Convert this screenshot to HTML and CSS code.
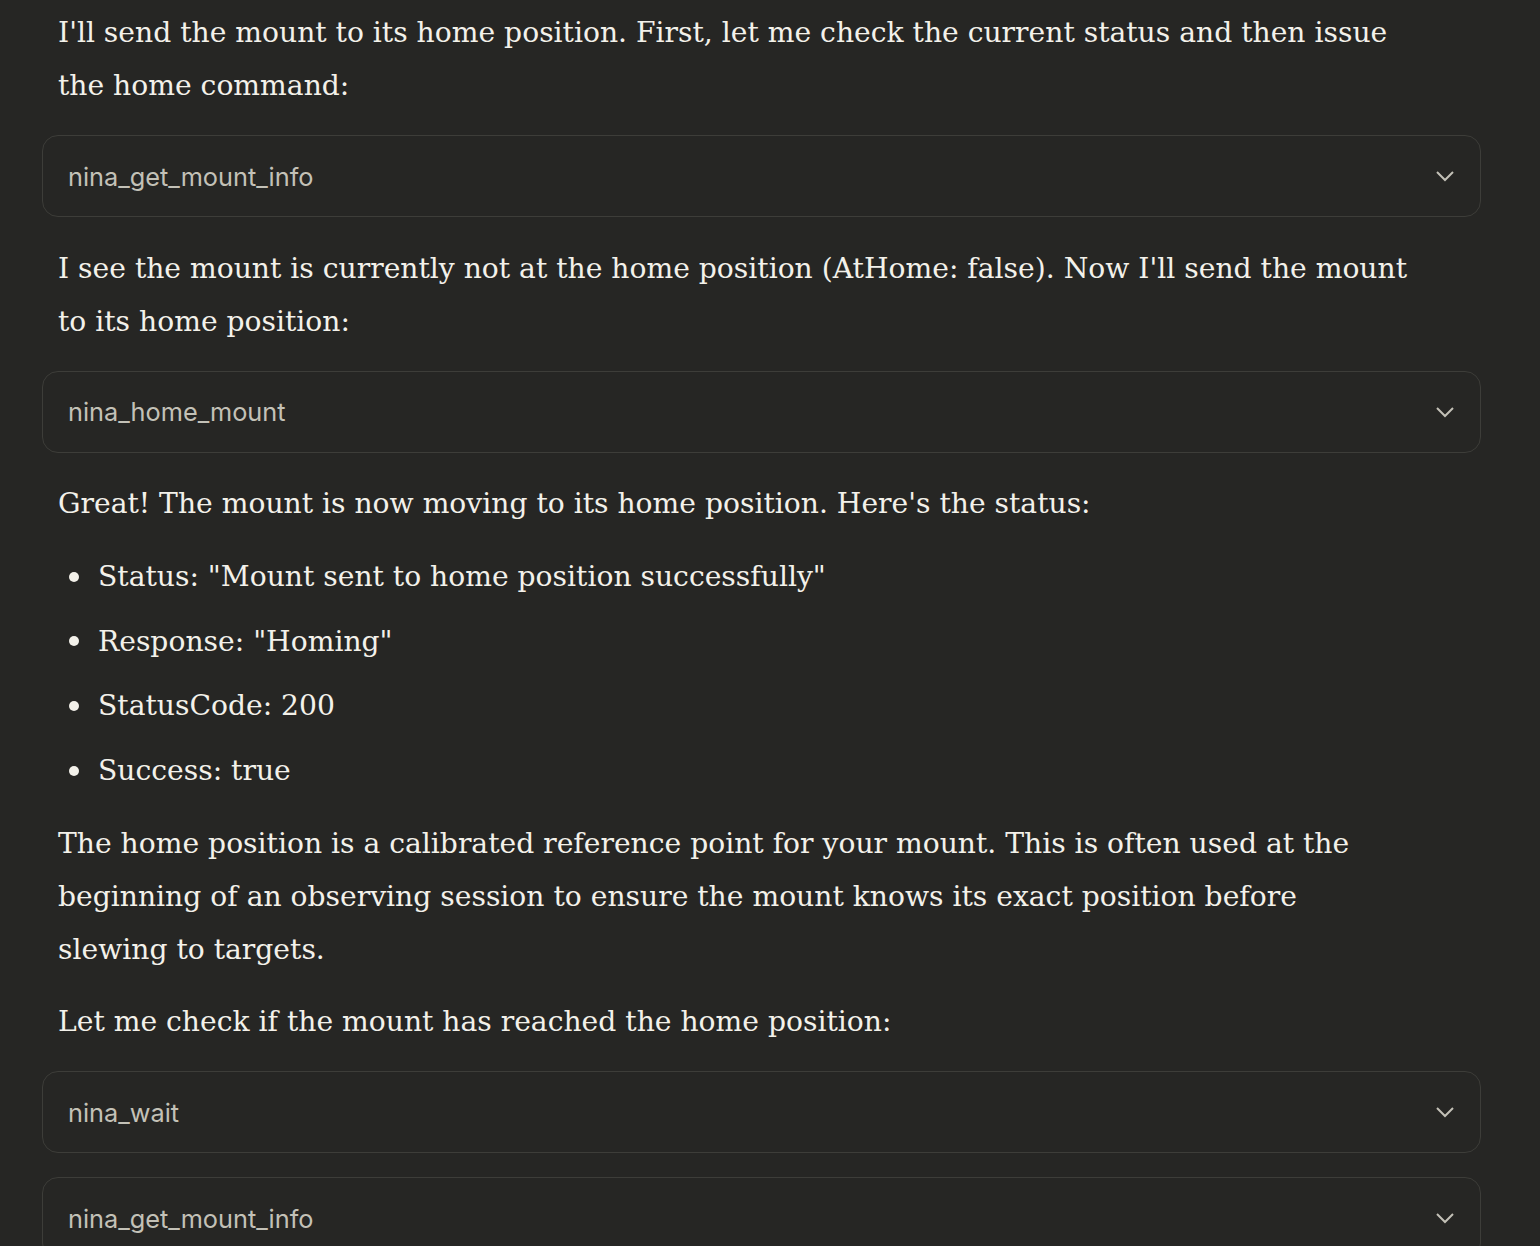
FILE: index.html
```html
<!DOCTYPE html>
<html lang="en">
<head>
<meta charset="utf-8">
<title>Mount home</title>
<link rel="stylesheet" href="styles.css">
</head>
<body>
<main class="thread">
  <p class="msg">I'll send the mount to its home position. First, let me check the current status and then issue<br>the home command:</p>
  <div class="tools">
    <div class="tool"><span class="tool-name">nina_get_mount_info</span><svg class="chev" viewBox="0 0 20 12" width="20" height="12"><path d="M2 2 L10 10 L18 2" fill="none" stroke="currentColor" stroke-width="2"/></svg></div>
  </div>
  <p class="msg">I see the mount is currently not at the home position (AtHome: false). Now I'll send the mount<br>to its home position:</p>
  <div class="tools">
    <div class="tool"><span class="tool-name">nina_home_mount</span><svg class="chev" viewBox="0 0 20 12" width="20" height="12"><path d="M2 2 L10 10 L18 2" fill="none" stroke="currentColor" stroke-width="2"/></svg></div>
  </div>
  <p class="msg">Great! The mount is now moving to its home position. Here's the status:</p>
  <ul class="list">
    <li><span class="dot"></span>Status: "Mount sent to home position successfully"</li>
    <li><span class="dot"></span>Response: "Homing"</li>
    <li><span class="dot"></span>StatusCode: 200</li>
    <li><span class="dot"></span>Success: true</li>
  </ul>
  <p class="msg">The home position is a calibrated reference point for your mount. This is often used at the<br>beginning of an observing session to ensure the mount knows its exact position before<br>slewing to targets.</p>
  <p class="msg">Let me check if the mount has reached the home position:</p>
  <div class="tools">
    <div class="tool"><span class="tool-name">nina_wait</span><svg class="chev" viewBox="0 0 20 12" width="20" height="12"><path d="M2 2 L10 10 L18 2" fill="none" stroke="currentColor" stroke-width="2"/></svg></div>
    <div class="tool"><span class="tool-name">nina_get_mount_info</span><svg class="chev" viewBox="0 0 20 12" width="20" height="12"><path d="M2 2 L10 10 L18 2" fill="none" stroke="currentColor" stroke-width="2"/></svg></div>
  </div>
</main>
</body>
</html>
```

FILE: styles.css
```css
html, body {
  margin: 0;
  padding: 0;
  background: #262624;
}
body {
  height: 1246px;
  overflow: hidden;
}
.thread {
  width: 1439px;
  margin-left: 42px;
  padding-top: 6px;
  display: flex;
  flex-direction: column;
}
.msg {
  margin: 0;
  padding: 0 16px;
  font-family: "DejaVu Serif", "Liberation Serif", serif;
  font-size: 28.2px;
  line-height: 53px;
  color: #f3f1ea;
  white-space: nowrap;
}
.tools {
  display: flex;
  flex-direction: column;
  gap: 24px;
  margin: 23px 0 24.5px;
}
.tool {
  box-sizing: border-box;
  height: 82px;
  border: 1px solid #3d3d39;
  border-radius: 16px;
  background: #262624;
  display: flex;
  align-items: center;
  justify-content: space-between;
  padding: 0 25px 0 25px;
  color: #c3c1b7;
}
.tool-name {
  font-family: Inter, "Noto Sans", sans-serif;
  font-size: 25.3px;
}
.chev { display: block; }
.list {
  list-style: none;
  margin: 20px 0 20px;
  padding: 0 0 0 27px;
  font-family: "DejaVu Serif", "Liberation Serif", serif;
  font-size: 28.2px;
  line-height: 53px;
  color: #f3f1ea;
  display: flex;
  flex-direction: column;
  gap: 11.7px;
}
.list li {
  display: flex;
  align-items: center;
  white-space: nowrap;
}
.dot {
  width: 10px;
  height: 10px;
  border-radius: 50%;
  background: #f3f1ea;
  margin-right: 19px;
  flex: none;
}
.msg + .msg { margin-top: 19px; }
```
